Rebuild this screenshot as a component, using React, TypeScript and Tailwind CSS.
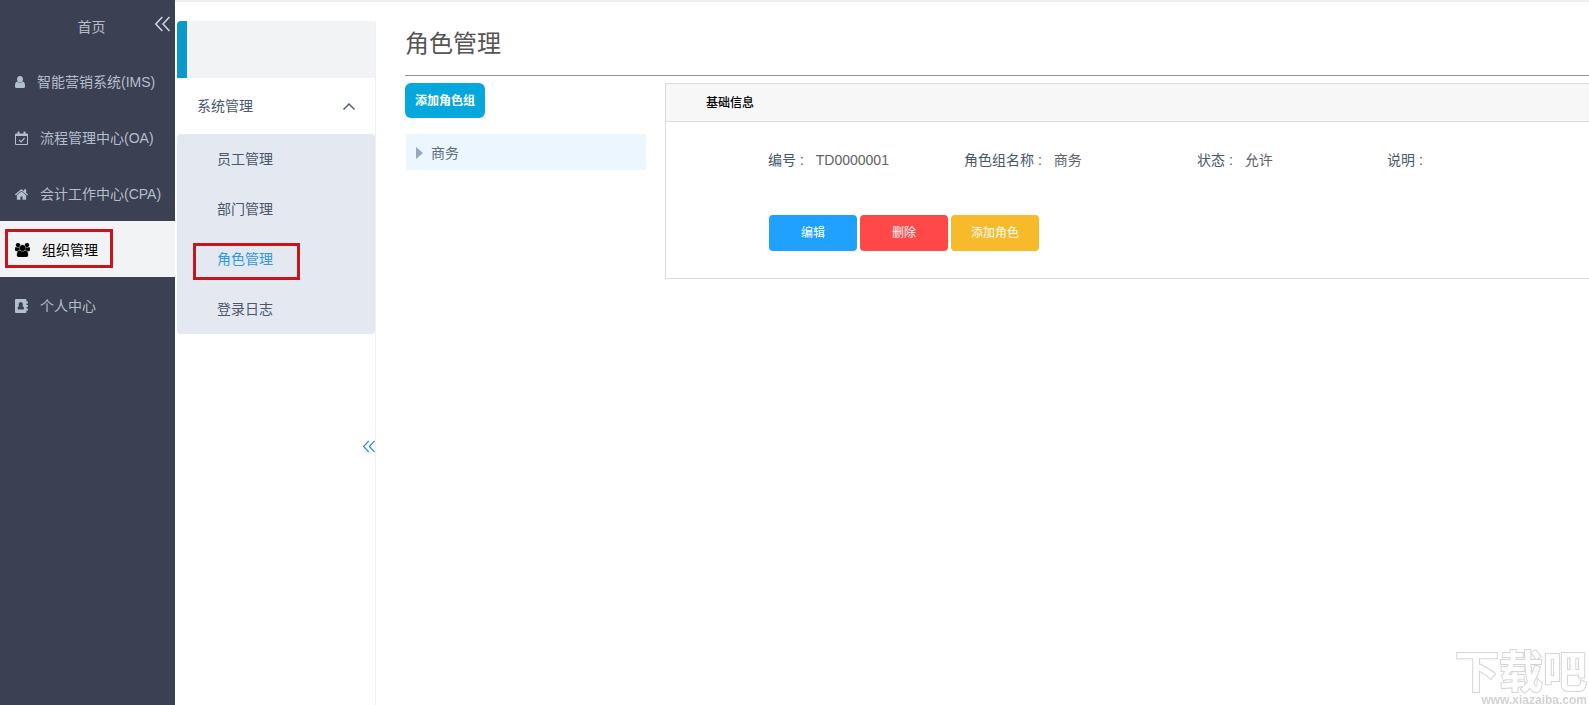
import type { ReactNode } from "react";

type IconProps = { className?: string };

const UserIcon = () => (
  <svg viewBox="0 0 10 12" width="10" height="12" fill="currentColor" aria-hidden="true">
    <ellipse cx="5" cy="3.200" rx="2.900" ry="3.200" />
    <path d="M2.300 5.500Q0 6 0 9.600V10.500Q0 12 1.500 12h7Q10 12 10 10.500V9.600Q10 6 7.700 5.500 6.600 6.700 5 6.700T2.300 5.500z" />
  </svg>
);

const CalendarIcon = () => (
  <svg viewBox="0 0 13 14" width="13" height="14" fill="none" stroke="currentColor" aria-hidden="true">
    <path d="M0.5 3h12v10.5h-12z" />
    <path d="M0.5 4h12" strokeWidth="2" />
    <path d="M3.5 0.5v3M9.5 0.5v3" strokeWidth="2" />
    <path d="M4 8.8l2 2 3.6-3.8" strokeWidth="1.2" />
  </svg>
);

const HomeIcon = () => (
  <svg viewBox="90 253 1612 1283" width="13" height="11" fill="currentColor" aria-hidden="true">
    <path d="M1472 992v480q0 26-19 45t-45 19h-384v-384H768v384H384q-26 0-45-19t-19-45V992q0-1 .5-3t.5-3l575-474 575 474q1 2 1 6zm223-69l-62 74q-8 9-21 11h-3q-13 0-21-7L896 424l-692 577q-12 8-24 7-13-2-21-11l-62-74q-8-10-7-23.5T101 878L820 279q32-26 76-26t76 26l244 204V288q0-14 9-23t23-9h192q14 0 23 9t9 23v408l219 182q10 8 11 21.5t-7 23.5z" />
  </svg>
);

const UsersIcon = () => (
  <svg viewBox="-64 0 1920 1792" width="15" height="14" fill="currentColor" stroke="currentColor" strokeWidth="40" aria-hidden="true">
    <path d="M529 896q-162 5-265 128H130q-82 0-138-40.5T-64 865q0-353 124-353 6 0 43.5 21t97.5 42.5T320 597q67 0 133-23-5 37-5 66 0 139 81 256zm1071 637q0 120-73 189.5t-194 69.5H459q-121 0-194-69.5T192 1533q0-53 3.5-103.5t14-109T236 1212t43-97.5 62-81 85.5-53.5T538 960q10 0 43 21.5t73 48 107 48 135 21.5 135-21.5 107-48 73-48 43-21.5q61 0 111.5 20t85.5 53.5 62 81 43 97.5 26.5 108.5 14 109 3.5 103.5zM576 256q0 106-75 181t-181 75-181-75-75-181 75-181T320 0t181 75 75 181zm704 384q0 159-112.5 271.5T896 1024 624.5 911.5 512 640t112.5-271.5T896 256t271.5 112.5T1280 640zm576 225q0 78-56 118.5t-138 40.5h-134q-103-123-265-128 81-117 81-256 0-29-5-66 66 23 133 23 59 0 119-21.5t97.5-42.5 43.5-21q124 0 124 353zm-128-609q0 106-75 181t-181 75-181-75-75-181 75-181 181-75 181 75 75 181z" />
  </svg>
);

const AddressBookIcon = () => (
  <svg viewBox="0 0 13 14" width="13" height="14" fill="currentColor" aria-hidden="true">
    <path
      fillRule="evenodd"
      d="M1 0h9.500q1 0 1 1v1.500h1q.5 0 .5.5v1q0 .5-.5.5h-1V6h1q.5 0 .5.5v1q0 .5-.5.5h-1v1.500h1q.5 0 .5.5v1q0 .5-.5.5h-1V13q0 1-1 1H1q-1 0-1-1V1q0-1 1-1zM5.750 3a2.200 2.400 0 0 0-1.500 4.100Q2.500 7.300 2.500 9.300q0 1.200 1 1.200h4.500q1 0 1-1.200 0-2-1.750-2.200A2.200 2.400 0 0 0 5.750 3z"
    />
  </svg>
);

const DoubleLeftIcon = ({ className }: IconProps) => (
  <svg viewBox="0 0 14 14" className={className} fill="none" stroke="currentColor" strokeWidth="1.4" aria-hidden="true">
    <path d="M6.800 0.500L0.800 7l6 6.500M13.500 0.500L7.500 7l6 6.500" />
  </svg>
);

const ChevronUpIcon = () => (
  <svg viewBox="0 0 12 7" width="12" height="7" fill="none" stroke="currentColor" strokeWidth="1.4" aria-hidden="true">
    <path d="M0.500 6.500L6 1l5.500 5.500" />
  </svg>
);

type NavItem = { label: string; icon: ReactNode; active?: boolean };

const navItems: NavItem[] = [
  { label: "智能营销系统(IMS)", icon: <UserIcon /> },
  { label: "流程管理中心(OA)", icon: <CalendarIcon /> },
  { label: "会计工作中心(CPA)", icon: <HomeIcon /> },
  { label: "组织管理", icon: <UsersIcon />, active: true },
  { label: "个人中心", icon: <AddressBookIcon /> },
];

const subItems = [
  { label: "员工管理" },
  { label: "部门管理" },
  { label: "角色管理", active: true },
  { label: "登录日志" },
];

const fields = [
  { label: "编号", value: "TD0000001" },
  { label: "角色组名称", value: "商务" },
  { label: "状态", value: "允许" },
  { label: "说明", value: "" },
];

const actions = [
  { label: "编辑", color: "bg-[#20a0ff]" },
  { label: "删除", color: "bg-[#ff4949]" },
  { label: "添加角色", color: "bg-[#f7ba2a]" },
];

function MainNav() {
  return (
    <nav className="w-[175px] shrink-0 bg-[#3b4052] text-[#b4bfcd]">
      <div className="relative flex h-[53px] items-center justify-center">
        <a href="#home" className="pl-2">首页</a>
        <button type="button" aria-label="收起主菜单" className="absolute right-[5px] top-4 text-[#d3d8e0]">
          <DoubleLeftIcon className="h-4 w-[15px]" />
        </button>
      </div>
      <ul>
        {navItems.map((item) => (
          <li key={item.label} className="relative">
            <a
              href="#nav"
              className={`flex h-14 items-center gap-3 whitespace-nowrap pl-[15px] pt-0.5 ${
                item.active ? "bg-[#f2f3f5] text-black" : ""
              }`}
            >
              {item.icon}
              {item.label}
            </a>
            {item.active && (
              <span className="pointer-events-none absolute left-[5px] top-2 h-[39px] w-[108px] border-3 border-[#c4161c]" />
            )}
          </li>
        ))}
      </ul>
    </nav>
  );
}

function SubNav() {
  return (
    <aside className="relative ml-0.5 mt-[19px] w-[199px] shrink-0 border-r border-[#edeff3] text-[#48576a]">
      <div className="h-[57px] rounded-t border-l-10 border-[#0a99c9] bg-[#f2f3f5]" />
      <button type="button" aria-expanded="true" className="flex h-14 w-full items-center justify-between pl-5 pr-5">
        系统管理
        <ChevronUpIcon />
      </button>
      <ul className="rounded-sm bg-[#e4e8f1]">
        {subItems.map((item) => (
          <li key={item.label} className="relative">
            <a href="#sub" className={`flex h-[50px] items-center pl-10 ${item.active ? "text-[#3097e0]" : ""}`}>
              {item.label}
            </a>
            {item.active && (
              <span className="pointer-events-none absolute left-4 top-[9px] h-[37px] w-[107px] border-3 border-[#c4161c]" />
            )}
          </li>
        ))}
      </ul>
      <button type="button" aria-label="收起子菜单" className="absolute right-0 top-[419px] text-[#2a8fae]">
        <DoubleLeftIcon className="h-[13px] w-3" />
      </button>
    </aside>
  );
}

function InfoPanel() {
  return (
    <section className="min-w-0 flex-1 border border-r-0 border-[#dcdcdc]">
      <h2 className="flex h-[38px] items-center border-b border-[#dcdcdc] bg-[#f7f7f7] pl-10 text-xs font-medium text-black">
        基础信息
      </h2>
      <div className="pb-[27px] pl-[102px] pt-7">
        <dl className="grid grid-cols-[196fr_233fr_190fr_202fr] leading-5">
          {fields.map((field) => (
            <div key={field.label} className="flex gap-3 whitespace-nowrap">
              <dt className="text-[#48576a]">{field.label} :</dt>
              <dd className="text-[#606266]">{field.value}</dd>
            </div>
          ))}
        </dl>
        <div className="mt-[45px] flex gap-[3px] pl-px">
          {actions.map((action) => (
            <button
              key={action.label}
              type="button"
              className={`h-9 w-[88px] rounded text-xs text-white ${action.color}`}
            >
              {action.label}
            </button>
          ))}
        </div>
      </div>
    </section>
  );
}

function Watermark() {
  return (
    <div className="pointer-events-none fixed bottom-0 right-0.5 flex flex-col items-end font-bold text-white">
      <span className="text-[44px] leading-[44px] [-webkit-text-stroke:2px_#d4d4d4] [paint-order:stroke_fill]">
        下载吧
      </span>
      <span className="text-xs leading-[10px] text-[#d2d2d2]">www.xiazaiba.com</span>
    </div>
  );
}

export default function App() {
  return (
    <div className="flex min-h-screen bg-white font-['Liberation_Sans','Noto_Sans_CJK_SC',sans-serif] text-sm">
      <MainNav />
      <div className="flex min-w-0 flex-1 border-t-2 border-[#eeeeee]">
        <SubNav />
        <main className="min-w-0 flex-1 pl-[29px]">
          <h1 className="flex h-[74px] items-center border-b border-[#939393] pt-2.5 text-2xl text-[#555555]">
            角色管理
          </h1>
          <div className="flex pt-[7px]">
            <div className="w-[260px] shrink-0">
              <button type="button" className="h-[35px] w-20 rounded-md bg-[#05a8dc] text-xs font-bold text-white">
                添加角色组
              </button>
              <ul role="tree" className="ml-px mt-4 w-60">
                <li role="treeitem" className="flex h-9 items-center gap-2 bg-[#ebf6ff] pl-2.5 pt-0.5 text-[#5e6d82]">
                  <svg viewBox="0 0 7 12" width="7" height="12" fill="#97a8be" aria-hidden="true">
                    <path d="M0 0l7 6-7 6z" />
                  </svg>
                  商务
                </li>
              </ul>
            </div>
            <InfoPanel />
          </div>
        </main>
      </div>
      <Watermark />
    </div>
  );
}
